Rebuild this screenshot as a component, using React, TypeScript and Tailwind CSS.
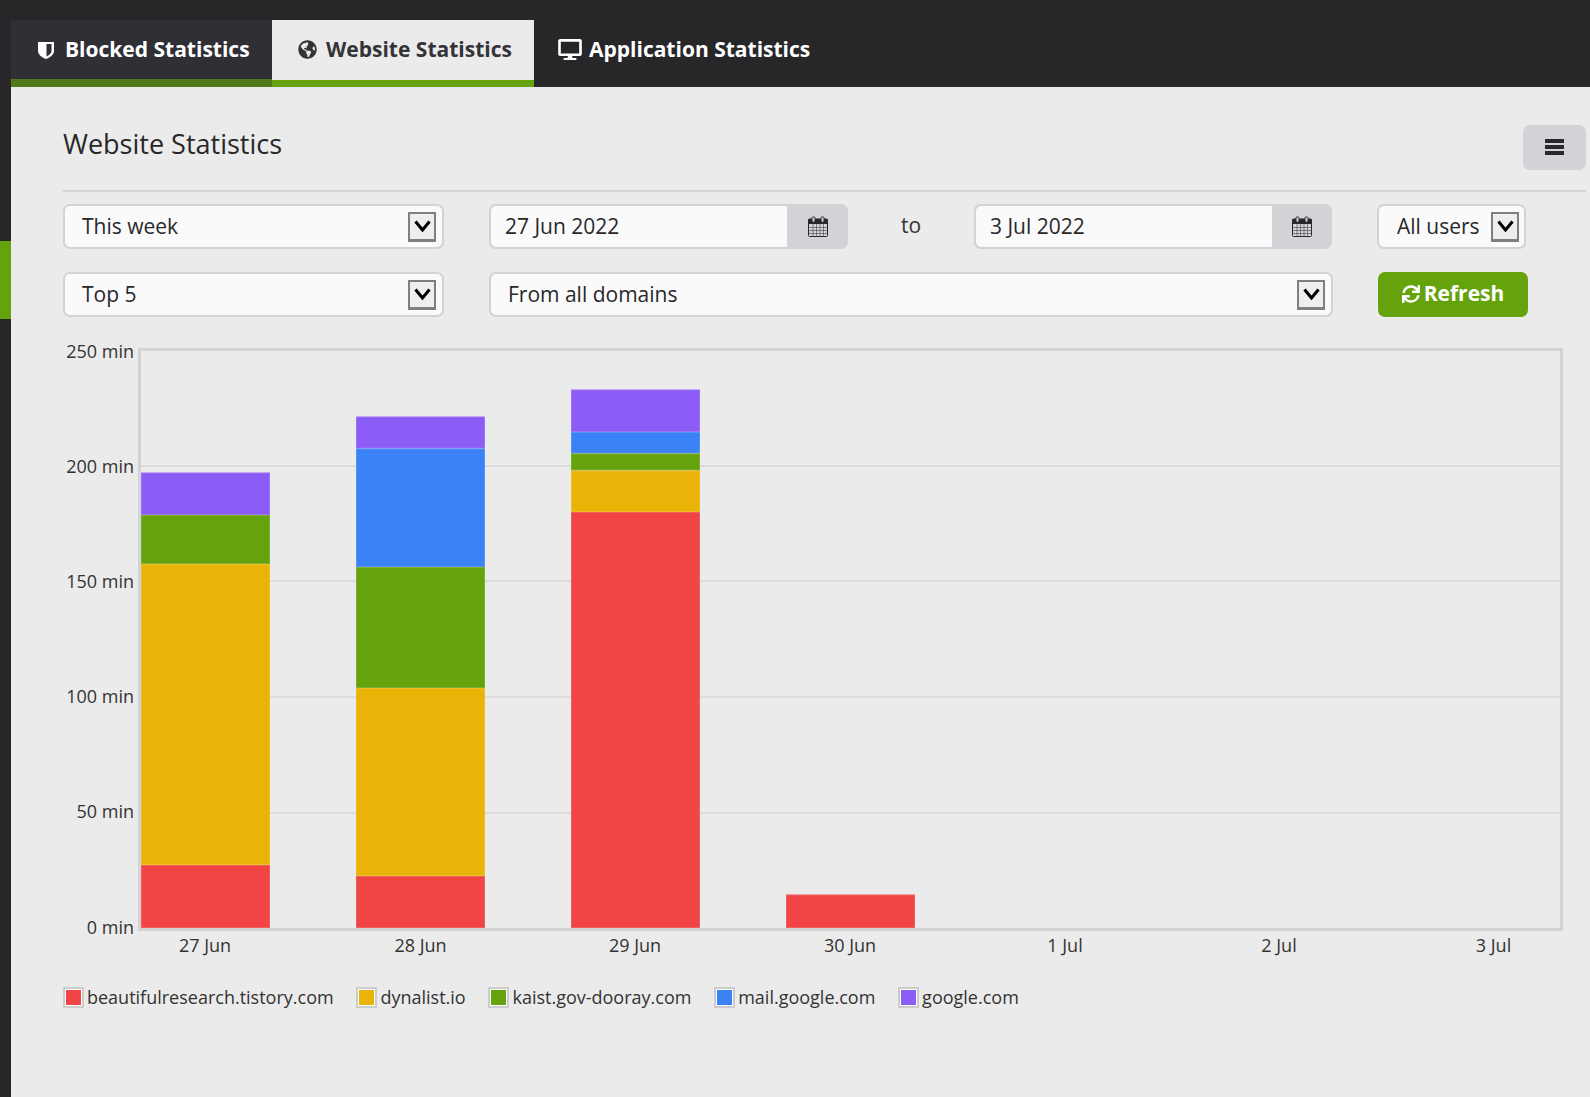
import { FaDesktop, FaGlobeAmericas, FaSync } from "react-icons/fa";

const RED = "#f14444";
const YELLOW = "#e9b308";
const GREEN = "#65a30d";
const BLUE = "#3b82f6";
const PURPLE = "#8b5cf6";

const yTicks = [
  { label: "250 min", y: 352 },
  { label: "200 min", y: 467 },
  { label: "150 min", y: 582 },
  { label: "100 min", y: 697 },
  { label: "50 min", y: 812 },
  { label: "0 min", y: 928 },
];

const gridLines = [466, 581, 697, 813];

const xTicks = [
  { label: "27 Jun", x: 205 },
  { label: "28 Jun", x: 420.5 },
  { label: "29 Jun", x: 635 },
  { label: "30 Jun", x: 850 },
  { label: "1 Jul", x: 1065 },
  { label: "2 Jul", x: 1279 },
  { label: "3 Jul", x: 1493.5 },
];

// top y of each stacked segment, page coordinates
const bars = [
  { x: 141, segs: [[472.5, 515, PURPLE], [515, 564, GREEN], [564, 865, YELLOW], [865, 928, RED]] },
  { x: 356, segs: [[416.5, 448.5, PURPLE], [448.5, 567, BLUE], [567, 688, GREEN], [688, 876, YELLOW], [876, 928, RED]] },
  { x: 571, segs: [[389.5, 432, PURPLE], [432, 453.5, BLUE], [453.5, 470.5, GREEN], [470.5, 512, YELLOW], [512, 928, RED]] },
  { x: 786, segs: [[894.5, 928, RED]] },
] as { x: number; segs: [number, number, string][] }[];

const legend = [
  { label: "beautifulresearch.tistory.com", color: RED },
  { label: "dynalist.io", color: YELLOW },
  { label: "kaist.gov-dooray.com", color: GREEN },
  { label: "mail.google.com", color: BLUE },
  { label: "google.com", color: PURPLE },
];

function ShieldIcon() {
  return (
    <svg width="16" height="18" viewBox="0 0 16 18" className="shrink-0">
      <path d="M0 1H16V10C16 14 11 17 8 18C5 17 0 14 0 10Z" fill="#fff" />
      <path d="M8.5 3H13.5V10C13.5 12.4 11 14.4 8.5 15.4Z" fill="#2f2f35" />
    </svg>
  );
}

function MenuIcon() {
  return (
    <svg width="19" height="16" viewBox="0 0 19 16">
      <path d="M0 0H19V4H0ZM0 6H19V10H0ZM0 12H19V16H0Z" fill="#28282a" />
    </svg>
  );
}

function CalendarIcon() {
  return (
    <svg width="20" height="21" viewBox="0 0 20 21">
      <rect x="0.5" y="3" width="19" height="17.5" rx="1" fill="#d3d3d7" stroke="#28282a" />
      <rect x="0.5" y="3" width="19" height="5" fill="#28282a" />
      <path
        d="M1 11.5H19M1 14.5H19M1 17.5H19M5 8V20M8.5 8V20M12 8V20M15.5 8V20"
        stroke="#28282a"
        strokeOpacity="0.7"
        strokeWidth="0.7"
      />
      <rect x="4" y="0.8" width="3" height="5.4" rx="1.5" fill="#d3d3d7" stroke="#28282a" />
      <rect x="13" y="0.8" width="3" height="5.4" rx="1.5" fill="#d3d3d7" stroke="#28282a" />
    </svg>
  );
}

function SelectArrow() {
  return (
    <span className="flex h-[30px] w-[28px] shrink-0 items-center justify-center border-2 border-b-[3px] border-[#7f7f7f] bg-[#eeeeee]">
      <svg width="17" height="12" viewBox="0 0 17 12">
        <path d="M1.5 1.5L8.5 10L15.5 1.5" fill="none" stroke="#000" strokeWidth="3" />
      </svg>
    </span>
  );
}

function SelectBox({ label, className }: { label: string; className: string }) {
  return (
    <div
      className={`flex h-[45px] items-center justify-between rounded-[7px] border-2 border-[#d3d3d7] bg-[#fafafa] text-[#28282a] ${className}`}
    >
      <span>{label}</span>
      <SelectArrow />
    </div>
  );
}

function DateBox({ value, className }: { value: string; className: string }) {
  return (
    <div className={`flex h-[45px] rounded-[7px] bg-[#d3d3d7] ${className}`}>
      <div className="flex w-[298px] items-center rounded-l-[7px] border-2 border-r-0 border-[#d3d3d7] bg-[#fafafa] pl-[14px] text-[#28282a]">
        {value}
      </div>
      <div className="flex flex-1 items-center justify-center">
        <CalendarIcon />
      </div>
    </div>
  );
}

function Chart() {
  return (
    <svg
      viewBox="63 330 1523 650"
      className="block h-[650px] w-[1523px]"
      fontFamily="'Open Sans', sans-serif"
      fontSize="18"
      fill="#333"
    >
      {gridLines.map((y) => (
        <rect key={y} x="141" y={y - 1} width="1419" height="2" fill="#dcdcde" />
      ))}
      <rect x="139.5" y="349.5" width="1422" height="580" fill="none" stroke="#d3d3d7" strokeWidth="3" />
      {bars.map((bar) =>
        bar.segs.map(([top, bottom, color]) => (
          <g key={`${bar.x}-${top}`}>
            <rect x={bar.x} y={top} width="129" height={bottom - top} fill={color} />
            <rect
              x={bar.x + 0.5}
              y={top + 0.5}
              width="128"
              height={bottom - top - 1}
              fill="none"
              stroke="#fff"
              strokeOpacity="0.15"
            />
          </g>
        )),
      )}
      {yTicks.map((t) => (
        <text key={t.label} x="134" y={t.y + 6} textAnchor="end">
          {t.label}
        </text>
      ))}
      {xTicks.map((t) => (
        <text key={t.label} x={t.x} y="952" textAnchor="middle">
          {t.label}
        </text>
      ))}
    </svg>
  );
}

export default function App() {
  return (
    <div className="flex h-[1097px] w-[1590px] overflow-hidden bg-[#272729] font-['Open_Sans',sans-serif] text-[21px]">
      <aside className="w-[11px] shrink-0 pt-[241px]">
        <div className="h-[78px] bg-[#65a30d]" />
      </aside>

      <div className="flex min-w-0 flex-1 flex-col bg-[#ebebeb]">
        <nav className="flex h-[87px] shrink-0 items-stretch bg-[#272729] pt-[20px] text-[21px] font-bold">
          <div className="flex w-[261px] items-center gap-[11px] border-b-[8px] border-[#527a18] bg-[#2f2f35] pl-[27px] text-white">
            <ShieldIcon />
            <span>Blocked Statistics</span>
          </div>
          <div className="flex w-[262px] items-center gap-[9px] border-b-[7px] border-[#65a30d] bg-[#ebebeb] pb-[1px] pl-[26px] text-[#333338]">
            <FaGlobeAmericas className="h-[19px] w-[19px]" />
            <span>Website Statistics</span>
          </div>
          <div className="flex items-center gap-[7px] pb-[8px] pl-[24px] text-white">
            <FaDesktop className="h-[21px] w-[24px]" />
            <span>Application Statistics</span>
          </div>
        </nav>

        <main className="flex flex-1 flex-col pl-[52px] pr-[4px]">
          <header className="flex h-[105px] items-start justify-between border-b-2 border-[#d3d3d7]">
            <h1 className="mt-[38px] text-[27px] font-normal leading-[38px] text-[#28282a]">Website Statistics</h1>
            <button className="mt-[38px] flex h-[45px] w-[63px] items-center justify-center rounded-[7px] bg-[#d3d3d7] pb-[1px]">
              <MenuIcon />
            </button>
          </header>

          <div className="mt-[12px] flex">
            <SelectBox label="This week" className="w-[381px] pl-[17px] pr-[6px]" />
            <DateBox value="27 Jun 2022" className="ml-[45px] w-[359px]" />
            <div className="flex w-[126px] items-center justify-center pb-[2px] text-[#333]">to</div>
            <DateBox value="3 Jul 2022" className="w-[358px]" />
            <SelectBox label="All users" className="ml-[45px] w-[149px] pl-[18px] pr-[5px]" />
          </div>

          <div className="mt-[23px] flex">
            <SelectBox label="Top 5" className="w-[381px] pl-[17px] pr-[6px]" />
            <SelectBox label="From all domains" className="ml-[45px] w-[844px] pl-[17px] pr-[6px]" />
            <button className="ml-[45px] flex h-[45px] w-[150px] items-center justify-center gap-[4px] rounded-[7px] bg-[#65a30d] pb-[1px] font-bold text-white">
              <FaSync className="h-[18px] w-[18px]" />
              <span>Refresh</span>
            </button>
          </div>

          <div className="mt-[13px]">
            <Chart />
          </div>

          <div className="mt-[4px] flex items-center gap-[22.75px] text-[18px] text-[#333]">
            {legend.map((item) => (
              <div key={item.label} className="flex items-center gap-[3px]">
                <span className="flex h-[21px] w-[21px] items-center justify-center bg-[#ccc]">
                  <span className="block h-[17px] w-[17px] border border-white" style={{ backgroundColor: item.color }} />
                </span>
                <span>{item.label}</span>
              </div>
            ))}
          </div>
        </main>
      </div>
    </div>
  );
}
